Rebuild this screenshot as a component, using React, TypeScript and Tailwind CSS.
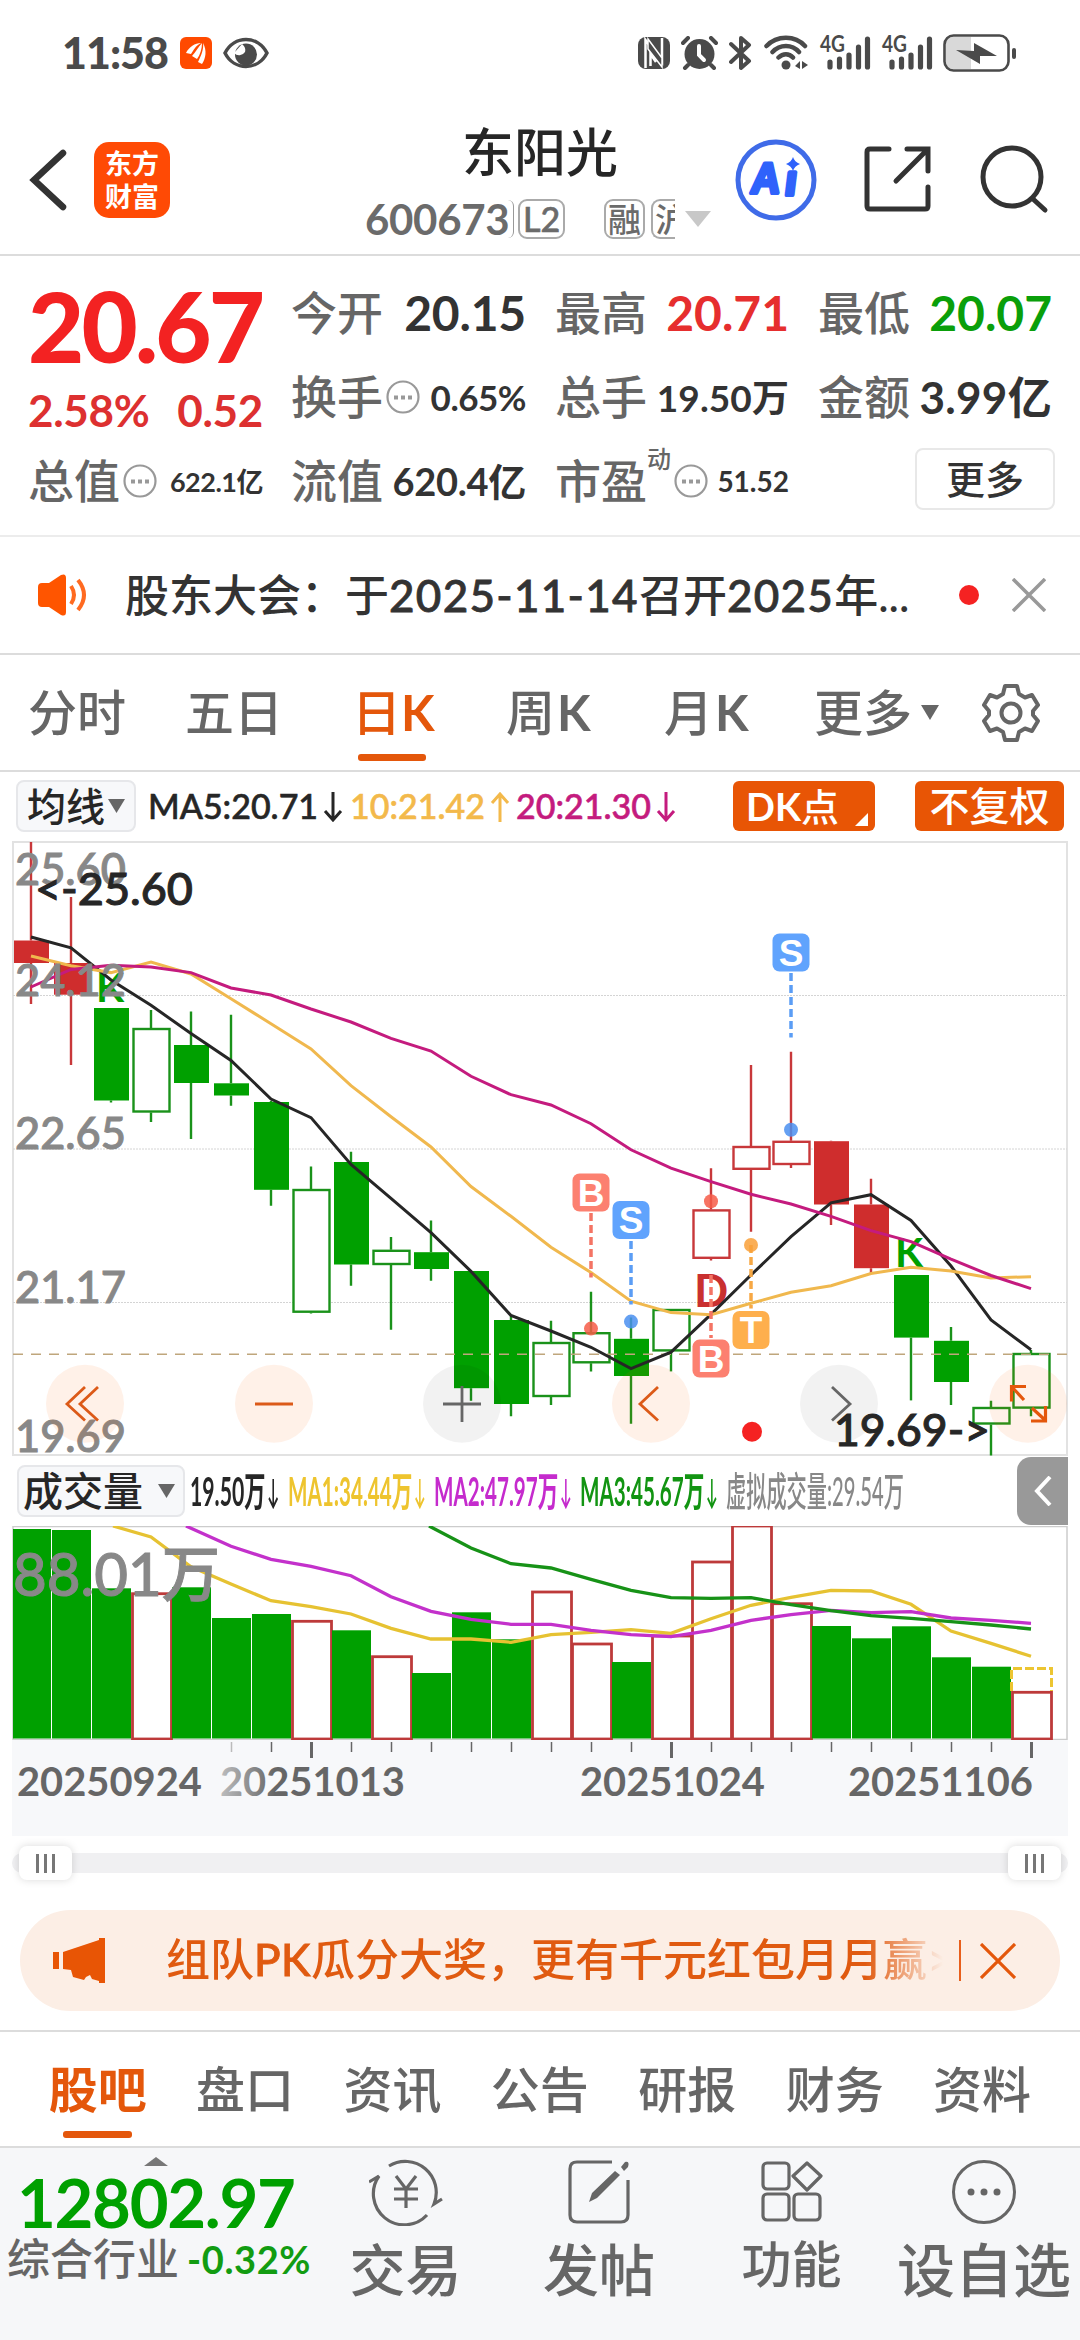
import type { ReactNode } from "react";

type Candle = [kind: "rf" | "rh" | "gf" | "gh", high: number, top: number, bottom: number, low: number];

const RED = "#cf2d2d";
const GREEN = "#00a000";

const CANDLES: Candle[] = [
  ["rf", 2, 100.5, 123, 164],
  ["rf", 57, 123, 154.7, 225],
  ["gf", 168, 168, 260.5, 262.5],
  ["gh", 170, 188, 272.5, 282],
  ["gf", 171.5, 205, 243, 299],
  ["gf", 174.7, 243.3, 255.5, 265.7],
  ["gf", 261, 262, 349.8, 365.7],
  ["gh", 326.5, 349, 472.7, 473.5],
  ["gf", 311.8, 322, 424.5, 445.7],
  ["gh", 397, 409.8, 425, 489.8],
  ["gf", 380.4, 412.2, 429, 440.8],
  ["gf", 431, 431, 548.2, 560.8],
  ["gf", 476, 480, 564, 576.3],
  ["gh", 480.8, 502, 557, 565],
  ["gh", 451.8, 492.2, 523.3, 531.4],
  ["gf", 477.5, 498.8, 536, 583.7],
  ["gh", 469, 469, 511.4, 531.4],
  ["rh", 328.2, 369.4, 418.8, 420.4],
  ["rh", 225, 306, 329.8, 391.8],
  ["rh", 211.8, 300.8, 325, 328],
  ["rf", 300.8, 301.2, 364.5, 385],
  ["rf", 338.8, 364.5, 428.2, 433.5],
  ["gf", 435, 435, 497.6, 560.4],
  ["gf", 487, 500.8, 542, 565],
  ["gh", 560.8, 567, 584.5, 615.5],
  ["gh", 510, 513, 568.6, 576.3],
];

const MA5 = [97, 107.8, 140, 165.3, 193.5, 220.4, 259, 277.6, 324.5, 358.4, 392.7, 431.4, 475.5, 491, 507.3, 528.6, 512.2, 474.3, 435, 396.7, 362.9, 354.7, 380.4, 426, 480, 509.8];
const MA10 = [116, 125.7, 132.6, 122, 134, 158.8, 183.7, 209, 245.7, 276.7, 307, 346.5, 376.3, 407.3, 432.6, 461.2, 472.6, 474.7, 463.3, 452.2, 445.7, 433.5, 427.3, 431, 438, 436.7];
const MA20 = [147, 129.4, 125.3, 127, 132.6, 148, 155, 169, 182, 198.4, 211, 236.3, 254.7, 265, 283.7, 309.8, 328.2, 341.6, 354.3, 364, 376.3, 390.6, 401.6, 419.2, 435.5, 448.6];

// top edge of every volume bar, with its direction
const VOLUMES: [up: boolean, top: number][] = [
  [false, 3], [false, 4], [false, 62.3], [true, 66.7], [false, 61.3], [false, 92], [false, 88],
  [true, 94.3], [false, 104.3], [true, 129.7], [false, 147], [false, 86.3], [false, 113.3],
  [true, 65], [true, 117], [false, 136], [true, 109], [true, 35], [true, -1], [true, 76.7],
  [false, 100], [false, 112.3], [false, 100.3], [false, 131.3], [false, 140.7], [true, 165.3],
];

const VOL_MA1 = [11, 40.7, 58, 74.7, 80.7, 88, 102.3, 113, 113, 116.3, 108.7, 106.3, 103.7, 107.3, 92.7, 79.3, 71.3, 64.3, 65, 78.3, 105, 117.3, 130.3];
const VOL_MA2 = [20.3, 33.3, 40.3, 49.7, 70.7, 85.3, 93.3, 98.3, 98.3, 104.3, 108.7, 110.7, 104.3, 94.3, 88.7, 84.3, 86.7, 85.7, 92, 94.3, 97.3];
const VOL_MA3 = [22, 37.7, 42, 53.3, 64.3, 71.7, 72.3, 71.7, 78.7, 84.7, 89.7, 92.3, 95.7, 99, 103];

const cx = (i: number) => 31 + i * 40;

function linePoints(values: number[], from = 0, lead = "") {
  return lead + " " + values.map((v, i) => `${cx(i + from)},${v}`).join(" ");
}

function StatusBar() {
  return (
    <div className="flex h-[105px] items-center pl-[62px] pr-[63px] text-[#4a4a4a]">
      <span className="w-[118px] text-[43px] leading-none font-black tracking-[-1px]">11:58</span>
      <svg width="32" height="32" viewBox="0 0 32 32">
        <rect width="32" height="32" rx="6" fill="#ff4a00" />
        <path d="M6 16 C9 10 15 6 21 6 C15 9 14 13 11 17 Z M12 19 C16 15 18 10 22 6 C22 12 20 18 17 22 Z M18 25 C21 19 24 12 23 6 C27 13 26 21 22 27 Z" fill="#fff" />
      </svg>
      <svg className="ml-[11px]" width="46" height="32" viewBox="0 0 46 32" fill="none">
        <path d="M2 16 C11 -2 35 -2 44 16 C35 34 11 34 2 16 Z" stroke="#4a4a4a" strokeWidth="3.500" />
        <circle cx="23" cy="17.500" r="11" fill="#4a4a4a" />
        <path d="M11 16 a7 7 0 0 0 11 -1 c1 -4 -1 -6 -3 -8 z" fill="#fff" />
      </svg>
      <div className="ml-auto flex items-center">
        <svg width="32" height="32" viewBox="0 0 32 32">
          <rect width="32" height="32" rx="8" fill="#4a4a4a" />
          <path d="M7.500 31 V3 L24 25 V1 M12.500 29 V17 L18 25" fill="none" stroke="#fff" strokeWidth="2.500" />
          <path d="M10 2 L24 21 V30 L10 12 Z" fill="#4a4a4a" stroke="#fff" strokeWidth="1.500" />
        </svg>
        <svg className="ml-[11px]" width="37" height="34" viewBox="0 0 37 34" fill="#4a4a4a">
          <circle cx="18.500" cy="18" r="15" />
          <path d="M2 7 L7 2 M35 7 L30 2 M7 29 L4 32 M30 29 L33 32" stroke="#4a4a4a" strokeWidth="4" strokeLinecap="round" />
          <path d="M18 10 V19 L23 24" fill="none" stroke="#fff" strokeWidth="4" strokeLinecap="round" />
        </svg>
        <svg className="ml-[11px]" width="23" height="36" viewBox="0 0 23 36" fill="none" stroke="#4a4a4a" strokeWidth="4" strokeLinejoin="round" strokeLinecap="round">
          <path d="M2 9 L20 26 L12 33 V3 L20 10 L2 27" />
        </svg>
        <svg className="ml-[12px]" width="45" height="35" viewBox="0 0 45 35" fill="none" stroke="#4a4a4a" strokeWidth="4.500" strokeLinecap="round">
          <path d="M2.500 11 C13 0 31 0 41 11 M8.500 17 C16 9 28 9 35 17 M14.500 22.500 C19 18 25 18 29 22.500" />
          <circle cx="22" cy="30" r="4.500" fill="#4a4a4a" stroke="none" />
          <path d="M36 26 V34 L31 31 Z M38 34 V26 L44 30 Z" fill="#4a4a4a" stroke="none" />
        </svg>
        <Signal className="ml-[11px] overflow-visible" />
        <Signal className="ml-[11px] overflow-visible" />
        <svg className="ml-[10px]" width="74" height="38" viewBox="0 0 74 38">
          <path d="M10 3 H28 V35 H10 Q3 35 3 28 V10 Q3 3 10 3Z" fill="#d9d9d9" />
          <rect x="1.500" y="1.500" width="64" height="35" rx="9" fill="none" stroke="#4a4a4a" strokeWidth="2.600" />
          <path d="M13 16 L31 17 V9 L54 22 L37 22 V30 Z" fill="#4a4a4a" />
          <rect x="69" y="14" width="4" height="11" rx="2" fill="#4a4a4a" />
        </svg>
      </div>
    </div>
  );
}

function Signal({ className }: { className: string }) {
  return (
    <svg className={className} width="51" height="35" viewBox="0 0 51 35">
      <text x="0" y="17" fontSize="23" fontWeight="700" textLength="25" lengthAdjust="spacingAndGlyphs" fill="#4a4a4a">4G</text>
      <path d="M10 27 V32 M19.500 24 V32 M29 20 V32 M38.500 12 V32 M47.500 4 V32" stroke="#4a4a4a" strokeWidth="5.200" strokeLinecap="round" />
    </svg>
  );
}

function Header() {
  return (
    <header className="flex h-[151px] items-start border-b-2 border-[#dcdcdc] pl-[28px]">
      <svg className="mt-[43px]" width="40" height="64" viewBox="0 0 40 64" fill="none" stroke="#333" strokeWidth="6.500" strokeLinecap="round">
        <path d="M35 5 L6 32 L35 59" />
      </svg>
      <div className="mt-[37px] ml-[26px] flex h-[76px] w-[76px] flex-col items-center justify-center gap-[5px] rounded-[15px] bg-[#ff4a05] text-[27px] leading-[28px] font-bold text-white">
        <span>东方</span>
        <span>财富</span>
      </div>
      <div className="mt-[17px] ml-[170px] w-[395px]">
        <div className="w-[400px] text-center text-[52px] leading-[60px] font-medium text-[#262626]">东阳光</div>
        <div className="mt-[15px] ml-[25px] flex items-center text-[#6b6b6b]">
          <span className="w-[143px] text-[42px] leading-[44px] font-bold tracking-[-0.3px]">600673</span>
          <span className="h-[38px] w-[6px] rounded-r-[8px] border-r border-[#999]" />
          <span className="ml-[4px] flex h-[40px] w-[47px] items-center justify-center rounded-[9px] border-2 border-[#aaa] text-[34px] leading-none font-medium [-webkit-text-stroke:0.6px]">L2</span>
          <span className="ml-[39px] flex h-[40px] w-[41px] items-center justify-center rounded-[9px] border-2 border-[#aaa] text-[33px] leading-none font-medium">融</span>
          <span className="ml-[6px] flex h-[40px] w-[24px] items-center overflow-hidden rounded-l-[9px] border-2 border-r-0 border-[#aaa] pl-[2px] text-[33px] leading-none font-medium">
            <span className="shrink-0">沪</span>
          </span>
          <svg className="ml-[10px]" width="26" height="16" viewBox="0 0 26 16">
            <path d="M0 0 H26 L13 16 Z" fill="#c8c8c8" />
          </svg>
        </div>
      </div>
      <svg className="mt-[34px]" width="82" height="82" viewBox="0 0 82 82">
        <circle cx="41" cy="41" r="38" fill="none" stroke="#3f6be8" strokeWidth="5" />
        <g transform="translate(6.500 0) skewX(-7)" fill="#2f62fb" stroke="#2f62fb" strokeWidth="4" strokeLinejoin="round" fontSize="43" fontWeight="700" fontFamily="Liberation Sans">
          <text x="15" y="54" textLength="29" lengthAdjust="spacingAndGlyphs">A</text>
          <text x="49" y="56">ı</text>
        </g>
        <path d="M58 18 Q59.500 23 65 25 Q59.500 27 58 32 Q56.500 27 51 25 Q56.500 23 58 18Z" fill="#2f62fb" />
      </svg>
      <svg className="mt-[41px] ml-[47px]" width="68" height="68" viewBox="0 0 68 68" fill="none" stroke="#333" strokeWidth="5" strokeLinecap="round">
        <path d="M25 3 H6 Q3 3 3 6 V60 Q3 63 6 63 H61 Q64 63 64 60 V41 M43 3 H64 V25 M63 4 L32 35" />
      </svg>
      <svg className="mt-[39px] ml-[48px]" width="70" height="70" viewBox="0 0 70 70" fill="none" stroke="#333" strokeWidth="5" strokeLinecap="round">
        <circle cx="32" cy="33" r="29" />
        <path d="M53 55 L65 66" />
      </svg>
    </header>
  );
}

function More() {
  return (
    <svg className="ml-[3px] shrink-0" width="34" height="34" viewBox="0 0 34 34">
      <circle cx="17" cy="17" r="15.500" fill="none" stroke="#999" strokeWidth="2.200" />
      <path d="M8 15.500h4v4h-4z M15 15.500h4v4h-4z M22 15.500h4v4h-4z" fill="#999" />
    </svg>
  );
}

function Cell({ label, extra, children }: { label: string; extra?: ReactNode; children?: ReactNode }) {
  return (
    <div className="flex h-[84px] items-center whitespace-nowrap">
      <span className="text-[46px] leading-none font-medium text-[#666]">{label}</span>
      {extra}
      <span className="ml-auto flex items-center leading-none font-bold text-[#333]">{children}</span>
    </div>
  );
}

function Quote() {
  return (
    <section className="flex h-[281px] border-b-2 border-[#ececec] pt-[15px] pl-[28px]">
      <div className="w-[235px]">
        <div className="flex h-[108px] items-center text-[97px] leading-none font-black tracking-[-2.8px] text-[#f32222]">20.67</div>
        <div className="flex h-[60px] items-center justify-between pt-[2px] text-[44px] leading-none font-bold tracking-[-0.3px] text-[#dd3030]">
          <span>2.58%</span>
          <span>0.52</span>
        </div>
        <Cell label="总值" extra={<More />}><span className="text-[27px] tracking-[-0.5px]">622.1亿</span></Cell>
      </div>
      <div className="ml-[28px] w-[235px]">
        <Cell label="今开"><span className="text-[48px] tracking-[-0.2px]">20.15</span></Cell>
        <Cell label="换手" extra={<More />}><span className="text-[35px] tracking-[-0.5px]">0.65%</span></Cell>
        <Cell label="流值"><span className="text-[38px] tracking-[-0.3px]">620.4亿</span></Cell>
      </div>
      <div className="ml-[29px] w-[234px]">
        <Cell label="最高"><span className="text-[48px] text-[#e62e2e]">20.71</span></Cell>
        <Cell label="总手"><span className="text-[37px] tracking-[0.1px]">19.50万</span></Cell>
        <Cell label="市盈" extra={<><span className="mb-[44px] text-[24px] leading-none font-medium text-[#666]">动</span><More /></>}>
          <span className="text-[28px]">51.52</span>
        </Cell>
      </div>
      <div className="ml-[29px] w-[234px]">
        <Cell label="最低"><span className="text-[48px] text-[#0a9f0a]">20.07</span></Cell>
        <Cell label="金额"><span className="text-[44px] tracking-[0.3px]">3.99亿</span></Cell>
        <div className="mt-[9px] ml-[97px] flex h-[62px] w-[140px] items-center justify-center rounded-[8px] border-2 border-[#e8e8e8] text-[39px] leading-none font-medium text-[#333]">更多</div>
      </div>
    </section>
  );
}

function Notice() {
  return (
    <section className="flex h-[118px] items-center border-b-2 border-[#dcdcdc] pl-[38px]">
      <svg width="50" height="42" viewBox="0 0 50 42">
        <path d="M0 13 Q0 9 4 9 H11 L23 1 Q28 -1 28 4 V38 Q28 43 23 41 L11 33 H4 Q0 33 0 29 Z" fill="#ff5500" />
        <path d="M33 12 Q39 21 33 30 M40 6 Q52 21 40 36" fill="none" stroke="#ff6a20" strokeWidth="4" />
      </svg>
      <span className="ml-[37px] flex w-[790px] text-[44px] leading-none font-medium whitespace-nowrap text-[#333]">
        股东大会：于<span className="tracking-[1.300px] [-webkit-text-stroke:0.8px]">2025-11-14</span>召开<span className="tracking-[1.300px] [-webkit-text-stroke:0.8px]">2025</span>年...
      </span>
      <span className="ml-[44px] h-[20px] w-[20px] rounded-full bg-[#f52222]" />
      <svg className="ml-[33px]" width="34" height="34" viewBox="0 0 34 34" stroke="#999" strokeWidth="3.500">
        <path d="M1 1 L33 33 M33 1 L1 33" />
      </svg>
    </section>
  );
}

function PeriodTabs() {
  return (
    <nav className="flex h-[117px] items-center border-b-2 border-[#dcdcdc] pl-[28px] text-[49px] leading-none font-medium whitespace-nowrap text-[#666]">
      <span className="w-[157px]">分时</span>
      <span className="w-[167px]">五日</span>
      <span className="relative w-[154px] text-[#e4570b]">
        日<b className="font-bold">K</b>
        <i className="absolute top-[66px] left-[6px] h-[7px] w-[68px] rounded-[3px] bg-[#e4570b]" />
      </span>
      <span className="w-[158px]">周<b className="ml-[2px] font-bold">K</b></span>
      <span className="w-[150px]">月<b className="ml-[2px] font-bold">K</b></span>
      <span>更多</span>
      <svg className="ml-[9px]" width="18" height="15" viewBox="0 0 18 15"><path d="M0 0H18L9 15Z" fill="#666" /></svg>
      <svg className="ml-[43px]" width="58" height="58" viewBox="0 0 58 58" fill="none" stroke="#666" strokeWidth="4" strokeLinejoin="round">
        <path d="M23 2 H35 L37 10 L43 13.500 L50 11 L56 21 L51 27 V31 L56 37 L50 47 L43 44.500 L37 48 L35 56 H23 L21 48 L15 44.500 L8 47 L2 37 L7 31 V27 L2 21 L8 11 L15 13.500 L21 10 Z" />
        <circle cx="29" cy="29" r="9.500" />
      </svg>
    </nav>
  );
}

function MaRow() {
  return (
    <div className="flex h-[68px] items-center pl-[16px] text-[34px] leading-none font-medium whitespace-nowrap">
      <div className="flex h-[52px] w-[120px] items-center rounded-[8px] border-2 border-[#e6e7ea] bg-[#f7f8fa] pl-[9px] text-[39px] text-[#262626]">
        均线
        <svg className="ml-[3px]" width="17" height="14" viewBox="0 0 17 14"><path d="M0 0H17L8.500 14Z" fill="#666" /></svg>
      </div>
      <span className="ml-[12px] w-[202px] text-[#262626] [-webkit-text-stroke:0.6px]">MA5:20.71<Arrow /></span>
      <span className="w-[166px] text-[#f3b94b] [-webkit-text-stroke:0.6px]">10:21.42<Arrow up /></span>
      <span className="w-[217px] text-[#c41b7e] [-webkit-text-stroke:0.6px]">20:21.30<Arrow /></span>
      <div className="flex h-[50px] w-[142px] items-center rounded-[6px] bg-[#e85505] pl-[13px] text-[38px] text-white">
        <b className="font-bold">DK</b>点
        <svg className="mt-[26px] ml-auto mr-[7px]" width="13" height="13" viewBox="0 0 13 13"><path d="M13 0V13H0Z" fill="#fff" /></svg>
      </div>
      <div className="ml-[40px] flex h-[50px] w-[149px] items-center justify-center rounded-[6px] bg-[#e85505] text-[40px] text-white">不复权</div>
    </div>
  );
}

function Arrow({ up }: { up?: boolean }) {
  return (
    <svg className="ml-[5px] inline-block align-[-3px]" width="20" height="30" viewBox="0 0 20 30" fill="none" stroke="currentColor" strokeWidth="3">
      <path d={up ? "M10 30V2M2 11L10 2L18 11" : "M10 0V28M2 19L10 28L18 19"} />
    </svg>
  );
}

function Marker({ x, y, label, fill }: { x: number; y: number; label: string; fill: string }) {
  return (
    <g>
      <rect x={x - 18.5} y={y} width="37" height="38" rx="7" fill={fill} />
      <text x={x} y={y + 32} textAnchor="middle" fontSize="37" fontWeight="700" fontFamily="Liberation Sans" fill="#fff">{label}</text>
    </g>
  );
}

function PriceChart() {
  return (
    <svg className="block" width="1080" height="616" viewBox="0 0 1080 616" fontWeight="500">
      <rect x="13" y="2" width="1054" height="613" fill="none" stroke="#e2e2e2" strokeWidth="2" />
      {[155.5, 309, 462.5].map((y) => (
        <path key={y} d={`M13 ${y}H1067`} stroke="#d4d4d4" strokeDasharray="2 1" />
      ))}
      <g fontSize="45" fontWeight="700" fill={GREEN}>
        <text x="96" y="162" fontSize="41">K</text>
        <text x="895" y="427" fontSize="41">K</text>
        <text x="694" y="466.500" fill="#c93030">D</text>
      </g>
      {CANDLES.map(([kind, high, top, bottom, low], i) => {
        const color = kind[0] === "r" ? RED : GREEN;
        const line = kind[0] === "r" ? "#c8383a" : "#1a921a";
        return (
          <g key={i}>
            <path d={`M${cx(i)} ${high}V${top}M${cx(i)} ${bottom}V${low}`} stroke={line} strokeWidth="2.4" />
            {kind[1] === "f" ? (
              <rect x={cx(i) - 17} y={top} width="35" height={bottom - top} fill={color} />
            ) : (
              <rect x={cx(i) - 17.5} y={top + 1} width="36" height={bottom - top - 2} fill="#fff" stroke={line} strokeWidth="2.4" />
            )}
          </g>
        );
      })}
      <path d="M13 514.300H1067" stroke="#bfa67c" strokeWidth="1.500" strokeDasharray="10 8" />
      <g fill="none" strokeWidth="3">
        <polyline points={linePoints(MA5)} stroke="#262626" />
        <polyline points={linePoints(MA10)} stroke="#f0b84e" />
        <polyline points={linePoints(MA20)} stroke="#c41b7e" />
      </g>

      <g strokeWidth="3.500" strokeDasharray="8 4">
        <path d="M591 373V437.500M711 435V498" stroke="#f47464" />
        <path d="M631 401V464.500M791 133V197.500" stroke="#5b9df5" />
        <path d="M751 405V468.500" stroke="#f7a844" />
      </g>
      <g fillOpacity="0.85">
        <circle cx="591" cy="488.600" r="7" fill="#f65c48" />
        <circle cx="711" cy="361.300" r="7" fill="#f65c48" />
        <circle cx="631" cy="481.600" r="7" fill="#4a8ff0" />
        <circle cx="791" cy="289.800" r="7" fill="#4a8ff0" />
        <circle cx="751" cy="405" r="7" fill="#f9a038" />
      </g>
      <Marker x={591} y={333.5} label="B" fill="#fc8070" />
      <Marker x={631} y={361} label="S" fill="#60a3fd" />
      <Marker x={791} y={93.5} label="S" fill="#60a3fd" />
      <Marker x={751} y={471} label="T" fill="#feaf4d" />
      <Marker x={711} y={499.6} label="B" fill="#fc8070" />

      <g fontSize="45" fill="#888" stroke="#888" strokeWidth="1">
        {([["25.60", 44.5], ["24.12", 155.5], ["22.65", 308.5], ["21.17", 463], ["19.69", 612]] as [string, number][]).map(([t, y]) => (
          <text key={t} x="15" y={y} textLength="111" lengthAdjust="spacingAndGlyphs">{t}</text>
        ))}
      </g>

      <g fill="#ff6600" fillOpacity="0.09">
        <circle cx="85" cy="563.700" r="39" />
        <circle cx="274" cy="563.700" r="39" />
        <circle cx="651" cy="563.700" r="39" />
        <circle cx="1028" cy="563.700" r="39" />
        <circle cx="462" cy="563.700" r="39" fill="#000" fillOpacity="0.05" />
        <circle cx="839" cy="563.700" r="39" fill="#000" fillOpacity="0.05" />
      </g>
      <g fill="none" stroke="#dc5a18" strokeWidth="2.800">
        <path d="M85 547L67 564L85 580.500M98 547L80 564L98 580.500" />
        <path d="M255 564H293" />
        <path d="M658 547L640 564L658 580.500" />
        <path d="M1024 560L1012 547M1026 546.500H1011.500V561.500M1032 568L1045 580M1031 581H1045.500V566" stroke="#e4570b" strokeWidth="3.200" />
        <path d="M443 564H481M462 546V582" stroke="#666" />
        <path d="M832 547L850 564L832 580.500" stroke="#666" />
      </g>
      <circle cx="752" cy="591.800" r="10" fill="#f52222" />
      <g fontSize="45" fill="#262626" stroke="#262626" strokeWidth="1">
        <text x="35" y="64.500" textLength="158" lengthAdjust="spacingAndGlyphs">&lt;-25.60</text>
        <text x="834" y="605.500" textLength="156" lengthAdjust="spacingAndGlyphs">19.69-&gt;</text>
      </g>
    </svg>
  );
}

function VolumeHeader() {
  return (
    <div className="flex h-[70px] items-center pl-[17px] text-[40px] leading-none whitespace-nowrap">
      <div className="flex h-[52px] w-[168px] items-center rounded-[8px] border-2 border-[#e6e7ea] bg-[#f7f8fa] pl-[4px] font-medium text-[#262626]">
        成交量
        <svg className="ml-[15px]" width="17" height="14" viewBox="0 0 17 14"><path d="M0 0H17L8.500 14Z" fill="#666" /></svg>
      </div>
      <span className="ml-[5px] w-[98px] origin-left scale-x-[0.53] font-bold text-[#262626]">19.50万<Arrow /></span>
      <span className="w-[146px] origin-left scale-x-[0.515] font-bold text-[#eec42e]">MA1:34.44万<Arrow /></span>
      <span className="w-[146px] origin-left scale-x-[0.515] font-bold text-[#c52bcd]">MA2:47.97万<Arrow /></span>
      <span className="w-[146px] origin-left scale-x-[0.515] font-bold text-[#129412]">MA3:45.67万<Arrow /></span>
      <span className="w-[178px] origin-left scale-x-[0.505] font-medium text-[#888]">虚拟成交量:29.54万</span>
      <div className="ml-auto mr-[12px] flex h-[68px] w-[51px] items-center justify-center rounded-l-[14px] bg-[#999]">
        <svg width="18" height="30" viewBox="0 0 18 30" fill="none" stroke="#fff" strokeWidth="4"><path d="M16 1L3 15L16 29" /></svg>
      </div>
    </div>
  );
}

function VolumeChart() {
  return (
    <svg className="block" width="1080" height="214" viewBox="0 0 1080 214">
      <rect x="13" y="0.500" width="1054" height="213" fill="none" stroke="#ccc" strokeWidth="1.500" />
      {VOLUMES.map(([up, top], i) =>
        up ? (
          <rect key={i} x={cx(i) - 18.5} y={top + 1} width="39" height={212 - top} fill="#fff" stroke="#bd3a3a" strokeWidth="2.8" />
        ) : (
          <rect key={i} x={Math.max(cx(i) - 19, 13)} y={top} width={i ? 39 : 38} height={212.5 - top} fill={GREEN} />
        ),
      )}
      <path d="M1011.500 165V142.500H1051.500V165" fill="none" stroke="#ecc531" strokeWidth="3" strokeDasharray="9 3" />
      <g fill="none" strokeWidth="3.300">
        <polyline points={linePoints(VOL_MA1, 3, "113,0")} stroke="#e6c232" />
        <polyline points={linePoints(VOL_MA2, 5, "186,0")} stroke="#c331cb" />
        <polyline points={linePoints(VOL_MA3, 11, "429,0")} stroke="#179217" />
      </g>
      <text x="13" y="70" fontSize="60" fill="#888" stroke="#888" strokeWidth="1" textLength="207" lengthAdjust="spacingAndGlyphs" fontWeight="500">88.01万</text>
    </svg>
  );
}

function DateAxis() {
  return (
    <svg className="block" width="1080" height="96" viewBox="0 0 1080 96">
      <defs>
        <linearGradient id="fade" gradientUnits="userSpaceOnUse" x1="215" y1="0" x2="275" y2="0">
          <stop offset="0" stopColor="#666" stopOpacity="0.35" />
          <stop offset="1" stopColor="#666" />
        </linearGradient>
      </defs>
      <rect x="12" width="1056" height="96" fill="#f7f8fa" />
      {Array.from({ length: 21 }, (_, n) => n + 5).map((i) => {
        const tall = i % 9 === 7;
        return <path key={i} d={`M${cx(i) + 0.5} 2V${tall ? 18 : 12}`} stroke={i === 5 ? "#bbb" : "#666"} strokeWidth={tall ? 3 : 1.5} />;
      })}
      <g fontSize="41" fill="#666" fontWeight="700">
        <text x="17" y="56" textLength="185" lengthAdjust="spacingAndGlyphs">20250924</text>
        <text x="220" y="56" textLength="185" lengthAdjust="spacingAndGlyphs" fill="url(#fade)">20251013</text>
        <text x="580" y="56" textLength="185" lengthAdjust="spacingAndGlyphs">20251024</text>
        <text x="848" y="56" textLength="185" lengthAdjust="spacingAndGlyphs">20251106</text>
      </g>
    </svg>
  );
}

function Handle() {
  return (
    <div className="flex h-[34px] w-[53px] items-center justify-center gap-[5px] rounded-[8px] bg-white shadow-[0_0_8px_rgba(0,0,0,0.15)]">
      <i className="h-[19px] w-[3px] bg-[#777]" />
      <i className="h-[19px] w-[3px] bg-[#777]" />
      <i className="h-[19px] w-[3px] bg-[#777]" />
    </div>
  );
}

function RangeSlider() {
  return (
    <div className="flex h-[74px] items-start px-[12px] pt-[17px]">
      <div className="flex h-[20px] w-full items-center justify-between rounded-full bg-[#f0f0f2] px-[7px]">
        <Handle />
        <Handle />
      </div>
    </div>
  );
}

function Banner() {
  return (
    <div className="mx-[20px] flex h-[101px] items-center rounded-full bg-[#fceee5] pl-[33px]">
      <svg width="52" height="45" viewBox="0 0 52 45" fill="#e85505">
        <path d="M0 14H6V31H0Z M10 14L46 2V0H52V45H46V43L39 41L37 37L33 39L31 42L20 39L18 32L10 31Z" />
      </svg>
      <div className="mb-[4px] ml-[61px] w-[777px] overflow-hidden text-[44px] leading-[66px] font-medium whitespace-nowrap text-[#e05a10] [mask-image:linear-gradient(to_right,#000_90%,transparent_100%)]">
        组队<span className="tracking-[0.500px] [-webkit-text-stroke:0.8px]">PK</span>瓜分大奖，更有千元红包月月赢&gt;
      </div>
      <span className="ml-[16px] h-[41px] w-[1.5px] bg-[#e85f1c]" />
      <svg className="ml-[19px]" width="36" height="36" viewBox="0 0 36 36" stroke="#e4570b" strokeWidth="3.200"><path d="M1 1L35 35M35 1L1 35" /></svg>
    </div>
  );
}

const SECTIONS = ["股吧", "盘口", "资讯", "公告", "研报", "财务", "资料"];

function SectionTabs() {
  return (
    <nav className="mt-[19px] flex h-[118px] items-center border-y-2 border-[#dcdcdc] pl-[24px] text-[49px] leading-none font-medium text-[#666]">
      {SECTIONS.map((name, i) =>
        i === 0 ? (
          <span key={name} className="relative w-[147.400px] text-center font-bold text-[#e4570b]">
            {name}
            <i className="absolute top-[66px] left-[39px] h-[7px] w-[69px] rounded-[3px] bg-[#e4570b]" />
          </span>
        ) : (
          <span key={name} className="w-[147.400px] text-center">{name}</span>
        ),
      )}
    </nav>
  );
}

function BottomBar() {
  return (
    <footer className="flex h-[192px] items-start bg-[#f6f7f9] leading-none font-medium whitespace-nowrap text-[#666]">
      <div className="flex w-[312px] flex-col">
        <svg className="mt-[9px] ml-[144px]" width="24" height="9" viewBox="0 0 24 9"><path d="M12 0L24 9H0Z" fill="#777" /></svg>
        <span className="mt-[2px] ml-[17px] text-[67px] leading-[68px] font-bold tracking-[-1.3px] text-[#00a000]">12802.97</span>
        <div className="mt-[-1px] ml-[7px] flex items-center text-[43px] leading-[48px]">
          综合行业
          <span className="ml-[8px] text-[38px] font-bold tracking-[0.600px] text-[#129c12]">-0.32%</span>
        </div>
      </div>
      <div className="flex w-[187px] flex-col items-center pt-[10px]">
        <svg width="74" height="68" viewBox="0 0 74 68" fill="none" stroke="#666" strokeWidth="3.200">
          <path d="M20 8A31 31 0 0 1 65 46L73 41M58 57A31 31 0 0 1 10 18L0 24" />
          <path d="M27 18L37 31L47 18M37 31V50M25 31H49M25 41H49" />
        </svg>
        <span className="mt-[16px] text-[56px]">交易</span>
      </div>
      <div className="flex w-[200px] flex-col items-center pt-[12px]">
        <svg width="62" height="64" viewBox="0 0 62 64" fill="none" stroke="#666" strokeWidth="3.200">
          <path d="M44 2H9Q2 2 2 9V55Q2 62 9 62H53Q60 62 60 55V20" />
          <path d="M21 42L24 33L47 11L52 15L29 38ZM53 7L57 2Q62 1 60 7L56 11Z" fill="#666" stroke="none" />
        </svg>
        <span className="mt-[18px] text-[56px]">发帖</span>
      </div>
      <div className="flex w-[185px] flex-col items-center pt-[13px]">
        <svg width="62" height="62" viewBox="0 0 62 62" fill="none" stroke="#666" strokeWidth="3.200">
          <rect x="2" y="2" width="26" height="26" rx="4" />
          <rect x="2" y="33" width="26" height="26" rx="4" />
          <rect x="33" y="33" width="26" height="26" rx="4" />
          <path d="M46 2L60 15L46 29L32 15Z" strokeLinejoin="round" />
        </svg>
        <span className="mt-[16px] text-[50px]">功能</span>
      </div>
      <div className="flex w-[196px] flex-col items-center pt-[11px]">
        <svg className="ml-[3px]" width="66" height="66" viewBox="0 0 66 66">
          <circle cx="33" cy="33" r="30.500" fill="none" stroke="#666" strokeWidth="3" />
          <g fill="#666"><circle cx="20" cy="33" r="3.500" /><circle cx="33" cy="33" r="3.500" /><circle cx="46" cy="33" r="3.500" /></g>
        </svg>
        <span className="mt-[16px] ml-[4px] text-[58px]">设自选</span>
      </div>
    </footer>
  );
}

export default function App() {
  return (
    <div className="flex h-[2340px] w-[1080px] flex-col overflow-hidden bg-white font-['Lato','Noto_Sans_CJK_SC',sans-serif]">
      <StatusBar />
      <Header />
      <Quote />
      <Notice />
      <PeriodTabs />
      <MaRow />
      <PriceChart />
      <VolumeHeader />
      <VolumeChart />
      <DateAxis />
      <RangeSlider />
      <Banner />
      <SectionTabs />
      <BottomBar />
    </div>
  );
}
